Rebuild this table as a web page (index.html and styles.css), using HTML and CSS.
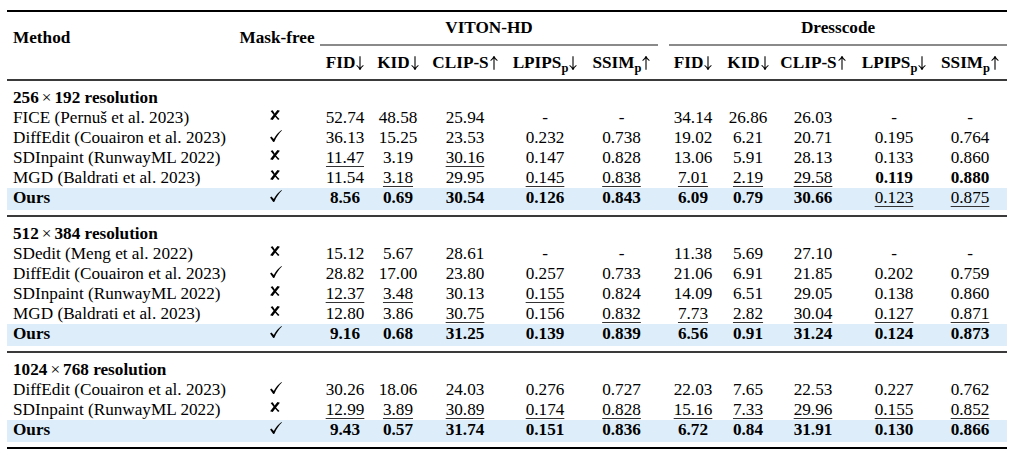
FILE: index.html
```html
<!DOCTYPE html>
<html lang="en">
<head>
<meta charset="utf-8">
<title>Quantitative comparison</title>
<link rel="stylesheet" href="styles.css">
</head>
<body>
<svg width="0" height="0" class="defs" aria-hidden="true">
  <defs>
    <symbol id="xmark" viewBox="0 0 10 10">
      <path d="M7.5 0 L9.9 0.8 C7.5 3.6 5 6.8 2.7 10 L0.1 9.3 C2.6 6.2 5.1 3 7.5 0 Z"/>
      <path d="M0.6 1 L2.7 0.2 C4.4 3.4 6.6 6.5 9.5 9.1 L8.1 9.9 C5.4 7.2 2.9 4.1 0.6 1 Z"/>
    </symbol>
    <symbol id="check" viewBox="0 0 12 12">
      <path d="M0.1 7.4 L1.4 6.4 L3.8 9.1 C5.6 5.6 8.2 2.4 11.5 0.1 L11.9 0.6 C8.9 3.4 6.4 7.1 4.4 11.8 L3.2 11.9 Z"/>
    </symbol>
    <symbol id="darr" viewBox="0 0 8 14">
      <path d="M4 0.3 V13.2 M0.6 9.4 Q3 10.9 4 13.6 Q5 10.9 7.4 9.4" fill="none" stroke="currentColor" stroke-width="1.1"/>
    </symbol>
    <symbol id="uarr" viewBox="0 0 8 14">
      <path d="M4 13.7 V0.8 M0.6 4.6 Q3 3.1 4 0.4 Q5 3.1 7.4 4.6" fill="none" stroke="currentColor" stroke-width="1.1"/>
    </symbol>
  </defs>
</svg>

<table class="results">
  <colgroup>
    <col class="c-method">
    <col class="c-mask">
    <col class="c-fid-v">
    <col class="c-kid-v">
    <col class="c-clip-v">
    <col class="c-lpips-v">
    <col class="c-ssim-v">
    <col class="c-gap">
    <col class="c-fid-d">
    <col class="c-kid-d">
    <col class="c-clip-d">
    <col class="c-lpips-d">
    <col class="c-ssim-d">
  </colgroup>
  <thead>
    <tr class="head-a">
      <th class="method-h" rowspan="2">Method</th>
      <th class="mask-h" rowspan="2">Mask-free</th>
      <th class="group" colspan="6"><div class="group-label viton">VITON-HD</div></th>
      <th class="group" colspan="5"><div class="group-label dress">Dresscode</div></th>
    </tr>
    <tr class="head-b">
      <th>FID<svg class="arr" role="img" aria-label="↓"><use href="#darr"/></svg></th>
      <th>KID<svg class="arr" role="img" aria-label="↓"><use href="#darr"/></svg></th>
      <th>CLIP-S<svg class="arr" role="img" aria-label="↑"><use href="#uarr"/></svg></th>
      <th>LPIPS<sub>p</sub><svg class="arr" role="img" aria-label="↓"><use href="#darr"/></svg></th>
      <th>SSIM<sub>p</sub><svg class="arr" role="img" aria-label="↑"><use href="#uarr"/></svg></th>
      <th></th>
      <th>FID<svg class="arr" role="img" aria-label="↓"><use href="#darr"/></svg></th>
      <th>KID<svg class="arr" role="img" aria-label="↓"><use href="#darr"/></svg></th>
      <th>CLIP-S<svg class="arr" role="img" aria-label="↑"><use href="#uarr"/></svg></th>
      <th>LPIPS<sub>p</sub><svg class="arr" role="img" aria-label="↓"><use href="#darr"/></svg></th>
      <th class="last">SSIM<sub>p</sub><svg class="arr" role="img" aria-label="↑"><use href="#uarr"/></svg></th>
    </tr>
  </thead>

  <tbody>
    <tr class="sec-title first"><td colspan="13">256<span class="times">×</span>192 resolution</td></tr>
    <tr>
      <td class="name">FICE (Pernuš et al. 2023)</td>
      <td class="mask"><svg class="x"><use href="#xmark"/></svg></td>
      <td>52.74</td><td>48.58</td><td>25.94</td><td>-</td><td>-</td><td></td>
      <td>34.14</td><td>26.86</td><td>26.03</td><td>-</td><td class="last">-</td>
    </tr>
    <tr>
      <td class="name">DiffEdit (Couairon et al. 2023)</td>
      <td class="mask"><svg class="ck"><use href="#check"/></svg></td>
      <td>36.13</td><td>15.25</td><td>23.53</td><td>0.232</td><td>0.738</td><td></td>
      <td>19.02</td><td>6.21</td><td>20.71</td><td>0.195</td><td class="last">0.764</td>
    </tr>
    <tr>
      <td class="name">SDInpaint (RunwayML 2022)</td>
      <td class="mask"><svg class="x"><use href="#xmark"/></svg></td>
      <td><span class="u">11.47</span></td><td>3.19</td><td><span class="u">30.16</span></td><td>0.147</td><td>0.828</td><td></td>
      <td>13.06</td><td>5.91</td><td>28.13</td><td>0.133</td><td class="last">0.860</td>
    </tr>
    <tr>
      <td class="name">MGD (Baldrati et al. 2023)</td>
      <td class="mask"><svg class="x"><use href="#xmark"/></svg></td>
      <td>11.54</td><td><span class="u">3.18</span></td><td>29.95</td><td><span class="u">0.145</span></td><td><span class="u">0.838</span></td><td></td>
      <td><span class="u">7.01</span></td><td><span class="u">2.19</span></td><td><span class="u">29.58</span></td><td class="b">0.119</td><td class="last b">0.880</td>
    </tr>
    <tr class="ours">
      <td class="name b">Ours</td>
      <td class="mask"><svg class="ck"><use href="#check"/></svg></td>
      <td class="b">8.56</td><td class="b">0.69</td><td class="b">30.54</td><td class="b">0.126</td><td class="b">0.843</td><td></td>
      <td class="b">6.09</td><td class="b">0.79</td><td class="b">30.66</td><td><span class="u">0.123</span></td><td class="last"><span class="u">0.875</span></td>
    </tr>
  </tbody>

  <tbody>
    <tr class="sec-title"><td colspan="13">512<span class="times">×</span>384 resolution</td></tr>
    <tr>
      <td class="name">SDedit (Meng et al. 2022)</td>
      <td class="mask"><svg class="x"><use href="#xmark"/></svg></td>
      <td>15.12</td><td>5.67</td><td>28.61</td><td>-</td><td>-</td><td></td>
      <td>11.38</td><td>5.69</td><td>27.10</td><td>-</td><td class="last">-</td>
    </tr>
    <tr>
      <td class="name">DiffEdit (Couairon et al. 2023)</td>
      <td class="mask"><svg class="ck"><use href="#check"/></svg></td>
      <td>28.82</td><td>17.00</td><td>23.80</td><td>0.257</td><td>0.733</td><td></td>
      <td>21.06</td><td>6.91</td><td>21.85</td><td>0.202</td><td class="last">0.759</td>
    </tr>
    <tr>
      <td class="name">SDInpaint (RunwayML 2022)</td>
      <td class="mask"><svg class="x"><use href="#xmark"/></svg></td>
      <td><span class="u">12.37</span></td><td><span class="u">3.48</span></td><td>30.13</td><td><span class="u">0.155</span></td><td>0.824</td><td></td>
      <td>14.09</td><td>6.51</td><td>29.05</td><td>0.138</td><td class="last">0.860</td>
    </tr>
    <tr>
      <td class="name">MGD (Baldrati et al. 2023)</td>
      <td class="mask"><svg class="x"><use href="#xmark"/></svg></td>
      <td>12.80</td><td>3.86</td><td><span class="u">30.75</span></td><td>0.156</td><td><span class="u">0.832</span></td><td></td>
      <td><span class="u">7.73</span></td><td><span class="u">2.82</span></td><td><span class="u">30.04</span></td><td><span class="u">0.127</span></td><td class="last"><span class="u">0.871</span></td>
    </tr>
    <tr class="ours">
      <td class="name b">Ours</td>
      <td class="mask"><svg class="ck"><use href="#check"/></svg></td>
      <td class="b">9.16</td><td class="b">0.68</td><td class="b">31.25</td><td class="b">0.139</td><td class="b">0.839</td><td></td>
      <td class="b">6.56</td><td class="b">0.91</td><td class="b">31.24</td><td class="b">0.124</td><td class="last b">0.873</td>
    </tr>
  </tbody>

  <tbody>
    <tr class="sec-title"><td colspan="13">1024<span class="times">×</span>768 resolution</td></tr>
    <tr>
      <td class="name">DiffEdit (Couairon et al. 2023)</td>
      <td class="mask"><svg class="ck"><use href="#check"/></svg></td>
      <td>30.26</td><td>18.06</td><td>24.03</td><td>0.276</td><td>0.727</td><td></td>
      <td>22.03</td><td>7.65</td><td>22.53</td><td>0.227</td><td class="last">0.762</td>
    </tr>
    <tr>
      <td class="name">SDInpaint (RunwayML 2022)</td>
      <td class="mask"><svg class="x"><use href="#xmark"/></svg></td>
      <td><span class="u">12.99</span></td><td><span class="u">3.89</span></td><td><span class="u">30.89</span></td><td><span class="u">0.174</span></td><td><span class="u">0.828</span></td><td></td>
      <td><span class="u">15.16</span></td><td><span class="u">7.33</span></td><td><span class="u">29.96</span></td><td><span class="u">0.155</span></td><td class="last"><span class="u">0.852</span></td>
    </tr>
    <tr class="ours">
      <td class="name b">Ours</td>
      <td class="mask"><svg class="ck"><use href="#check"/></svg></td>
      <td class="b">9.43</td><td class="b">0.57</td><td class="b">31.74</td><td class="b">0.151</td><td class="b">0.836</td><td></td>
      <td class="b">6.72</td><td class="b">0.84</td><td class="b">31.91</td><td class="b">0.130</td><td class="last b">0.866</td>
    </tr>
  </tbody>
</table>
</body>
</html>
```

FILE: styles.css
```css
html, body {
  margin: 0;
  padding: 0;
  background: #ffffff;
}

body {
  font-family: "Liberation Serif", "Times New Roman", serif;
  font-size: 17.2px;
  line-height: 20px;
  color: #000;
}

.defs {
  position: absolute;
  width: 0;
  height: 0;
  overflow: hidden;
}

.results {
  margin: 10px 0 0 7px;
  width: 1000px;
  table-layout: fixed;
  border-collapse: separate;
  border-spacing: 0;
  border-top: 2px solid #000;
  border-bottom: 2px solid #000;
}

.c-method  { width: 226px; }
.c-mask    { width: 88px; }
.c-fid-v   { width: 48px; }
.c-kid-v   { width: 58px; }
.c-clip-v  { width: 76px; }
.c-lpips-v { width: 84px; }
.c-ssim-v  { width: 69px; }
.c-gap     { width: 8px; }
.c-fid-d   { width: 58px; }
.c-kid-d   { width: 52px; }
.c-clip-d  { width: 78px; }
.c-lpips-d { width: 84px; }
.c-ssim-d  { width: 71px; }

th, td {
  padding: 0;
  text-align: center;
  white-space: nowrap;
  font-weight: normal;
}

th {
  font-weight: bold;
}

/* header */
.method-h {
  text-align: left;
  padding: 16px 0 0 6px;
  vertical-align: top;
  border-bottom: 2px solid #3a3a3a;
}

.mask-h {
  vertical-align: top;
  padding-top: 16px;
  border-bottom: 2px solid #3a3a3a;
}

.group {
  vertical-align: top;
}

.group-label {
  padding: 6px 0;
  border-bottom: 2px solid #8a8a8a;
}

.group-label.viton {
  margin: 0 6px 0 -1px;
}

.group-label.dress {
  margin: 0 0 0 5px;
}

.head-b th {
  padding: 7px 0 6px;
  border-bottom: 2px solid #3a3a3a;
}

.head-b th.last,
td.last {
  padding-right: 3px;
}

svg.arr {
  width: 8px;
  height: 14px;
  margin-left: 1px;
  vertical-align: -2px;
  color: #000;
}

sub {
  font-size: 12.5px;
  line-height: 0;
  vertical-align: -4px;
}

/* body */
td.name {
  text-align: left;
  padding-left: 6px;
}

.sec-title td {
  text-align: left;
  padding: 7px 0 0 6px;
  font-weight: bold;
  border-top: 2px solid #3a3a3a;
}

.sec-title.first td {
  border-top: none;
}

.times {
  font-weight: normal;
  margin: 0 3px;
}

.b {
  font-weight: bold;
}

.u {
  text-decoration: underline;
  text-decoration-thickness: 1px;
  text-underline-offset: 3px;
  text-decoration-color: #333;
}

.ours td {
  background: #ddeefa;
  background-clip: padding-box;
  padding-bottom: 2px;
  border-bottom: 5px solid transparent;
}

svg.x {
  width: 10px;
  height: 10px;
  vertical-align: 3px;
  margin-right: 4px;
  fill: #000;
}

svg.ck {
  width: 12px;
  height: 12px;
  vertical-align: 1px;
  margin-right: 2px;
  fill: #000;
}
```
